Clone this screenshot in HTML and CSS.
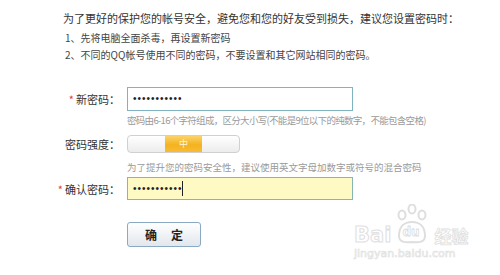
FILE: index.html
```html
<!DOCTYPE html>
<html lang="zh-CN">
<head>
<meta charset="utf-8">
<title>设置密码</title>
<link rel="stylesheet" href="styles.css">
</head>
<body>
<div class="page">
  <p class="intro">为了更好的保护您的帐号安全，避免您和您的好友受到损失，建议您设置密码时：</p>
  <div class="tips">
    <div>1、先将电脑全面杀毒，再设置新密码</div>
    <div>2、不同的QQ帐号使用不同的密码，不要设置和其它网站相同的密码。</div>
  </div>
  <div class="form">
    <div class="row row-pwd">
      <div class="label"><span class="req">*</span>新密码：</div>
      <div class="input"><span class="dots">•••••••••••</span></div>
    </div>
    <div class="hint hint1">密码由6-16个字符组成，区分大小写(不能是9位以下的纯数字，不能包含空格)</div>
    <div class="row row-strength">
      <div class="label">密码强度：</div>
      <div class="strength">
        <span class="seg"></span>
        <span class="seg seg-on">中</span>
        <span class="seg"></span>
      </div>
    </div>
    <div class="hint hint2">为了提升您的密码安全性，建议使用英文字母加数字或符号的混合密码</div>
    <div class="row row-confirm">
      <div class="label"><span class="req">*</span>确认密码：</div>
      <div class="input input-focus"><span class="dots">•••••••••••</span><span class="caret"></span></div>
    </div>
    <div class="actions">
      <button class="btn" type="button"><span>确</span><span>定</span></button>
    </div>
  </div>
  <div class="watermark">
    <div class="wm-top">
      <span class="wm-bai">Bai</span>
      <span class="wm-paw">
        <svg width="40" height="42" viewBox="0 0 40 42" fill="none" stroke="#dedede" stroke-width="2">
          <ellipse cx="10" cy="11" rx="3.5" ry="4.5"/>
          <ellipse cx="20" cy="5" rx="3.5" ry="4.5"/>
          <ellipse cx="30" cy="11" rx="3.5" ry="4.5"/>
          <path d="M7 32 C7 22 13 18 20 18 C27 18 33 22 33 32 C33 38 27 39 20 38 C13 39 7 38 7 32 Z"/>
        </svg>
        <span class="wm-du">du</span>
      </span>
      <span class="wm-jy">经验</span>
    </div>
    <div class="wm-url">jingyan.baidu.com</div>
  </div>
</div>
</body>
</html>
```
FILE: styles.css
```css
html, body {
  margin: 0;
  padding: 0;
  background: #fff;
}
body {
  font-family: "Noto Sans CJK SC", "Noto Sans", sans-serif;
  color: #333;
}
.page {
  position: relative;
  width: 500px;
  height: 275px;
  padding-top: 9px;
  box-sizing: border-box;
  overflow: hidden;
}
.intro {
  margin: 0 0 0 63px;
  font-size: 11px;
  line-height: 18px;
  color: #333;
}
.tips {
  margin: 1.5px 0 0 65px;
  font-size: 10px;
  line-height: 17px;
  color: #444;
}
.form {
  margin-top: 24.5px;
}
.row {
  display: flex;
  align-items: center;
}
.label {
  flex: none;
  width: 120px;
  text-align: right;
  font-size: 11px;
  color: #333;
  margin-right: 7px;
}
.req {
  color: #e0403a;
  margin-right: 2px;
}
.input {
  width: 226px;
  height: 24px;
  box-sizing: border-box;
  border: 1px solid #7fb3c2;
  background: #fff;
  display: flex;
  align-items: center;
  padding-left: 5px;
}
.dots {
  font-family: "Liberation Sans", sans-serif;
  font-size: 10px;
  letter-spacing: 1px;
  color: #222;
  line-height: 1;
}
.input-focus {
  background: #fff9c4;
  border-color: #86b6b4;
  height: 23px;
}
.caret {
  width: 1px;
  height: 15px;
  background: #222;
  margin-left: -1px;
}
.hint {
  margin-left: 127px;
  font-size: 9.5px;
  line-height: 18px;
  color: #9a9a9a;
}
.hint1 {
  letter-spacing: -0.7px;
}
.row-strength {
  margin-top: 6px;
}
.strength {
  display: flex;
  width: 113px;
  height: 18px;
  box-sizing: border-box;
  border: 1px solid #d0d0d0;
  border-radius: 4px;
  background: linear-gradient(#ffffff, #ececec);
  overflow: hidden;
}
.seg {
  flex: 1;
}
.seg-on {
  background: linear-gradient(#fbd36a, #f5b21f 55%, #f7bb35);
  color: #fff6dc;
  font-size: 9px;
  line-height: 16px;
  text-align: center;
}
.hint2 {
  margin-top: 5px;
}
.row-confirm {
  margin-top: 1px;
}
.actions {
  margin: 22px 0 0 127px;
}
.btn {
  width: 74px;
  height: 25px;
  border: 1px solid #8aaac4;
  border-radius: 3px;
  background: linear-gradient(#ffffff, #e2e7ed);
  display: flex;
  justify-content: center;
  align-items: center;
  gap: 14px;
  padding: 0;
  font-family: "Noto Sans CJK SC", sans-serif;
  font-size: 12px;
  font-weight: bold;
  color: #222;
}
.watermark {
  position: absolute;
  left: 354px;
  top: 202px;
  width: 125px;
}
.wm-top {
  display: flex;
  align-items: flex-end;
  height: 44px;
}
.wm-bai {
  font-family: "DejaVu Sans", sans-serif;
  font-size: 21px;
  font-weight: bold;
  line-height: 21px;
  color: #fff;
  -webkit-text-stroke: 1px #e0e0e0;
}
.wm-paw {
  position: relative;
  width: 40px;
  height: 42px;
  margin-left: 1px;
}
.wm-du {
  position: absolute;
  left: 10px;
  top: 22px;
  font-family: "DejaVu Sans", sans-serif;
  font-size: 12px;
  font-weight: bold;
  line-height: 12px;
  color: #fff;
  -webkit-text-stroke: 0.8px #dcdcdc;
}
.wm-jy {
  font-size: 17px;
  font-weight: bold;
  line-height: 21px;
  margin-left: 2px;
  color: #fff;
  -webkit-text-stroke: 0.8px #e0e0e0;
}
.wm-url {
  font-family: "DejaVu Sans", sans-serif;
  font-size: 11px;
  line-height: 14px;
  margin-top: 1px;
  color: #fff;
  -webkit-text-stroke: 0.7px #e2e2e2;
}
```
